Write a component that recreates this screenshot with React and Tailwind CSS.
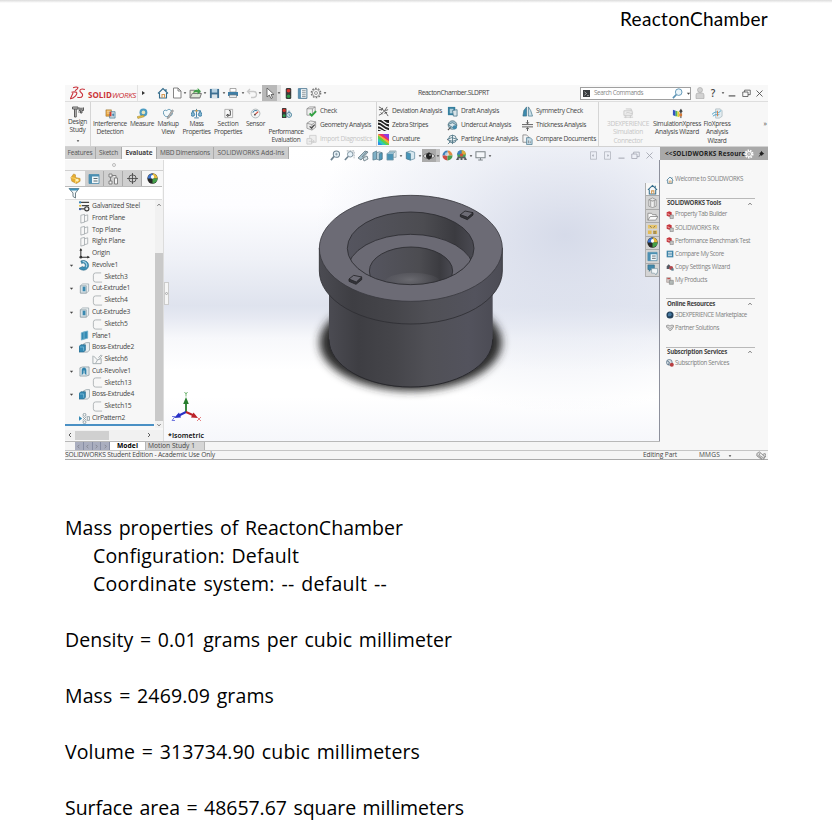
import React, { useLayoutEffect, useRef } from "react";

// Single line of text whose tracking is adjusted so that it spans `w` pixels.
function Fit({ w, children, className = "" }) {
  const ref = useRef(null);
  useLayoutEffect(() => {
    const el = ref.current;
    const adjust = () => {
      el.style.letterSpacing = "0px";
      const natural = el.getBoundingClientRect().width;
      el.style.letterSpacing = (w - natural) / el.textContent.length + "px";
    };
    adjust();
    if (document.fonts && document.fonts.ready) document.fonts.ready.then(adjust);
  }, [w, children]);
  return (
    <span ref={ref} className={"inline-block shrink-0 whitespace-pre " + className}>
      {children}
    </span>
  );
}

const art = {
  home: (
    <g fill="none" stroke="#356d8c" strokeWidth="1.1">
      <path d="M1 6.5 6 1.5 11 6.5M2.5 6V11H9.5V6M9 2v2" />
      <path d="M5 11V7.5H7.5V11" stroke="#d39a55" />
    </g>
  ),
  page: <path d="M2.5 1H7L10 4V11H2.5ZM7 1V4H10" fill="#fff" stroke="#777" strokeWidth=".9" />,
  open: (
    <g strokeWidth=".9">
      <path d="M1 10V3H5L6 4H10V10Z" fill="#ececd8" stroke="#777" />
      <path d="M1 10 3 6H11.5L10 10Z" fill="#dfe6d8" stroke="#777" />
      <path d="M4 6C4 3 6 2 8 3V1L11 4 8 7V5C6 4.5 5 5 4 6Z" fill="#3f9d46" />
    </g>
  ),
  save: (
    <g>
      <path d="M1 1H11V11H1Z" fill="#3d6f92" />
      <path d="M3 1H9V5H3Z" fill="#b9d2e2" />
      <path d="M3 7H9V11H3Z" fill="#dde5ea" />
    </g>
  ),
  print: (
    <g>
      <path d="M3 1.5H9V5H3Z" fill="#fff" stroke="#888" strokeWidth=".7" />
      <path d="M1 5H11V9H1Z" fill="#3f7ea6" />
      <path d="M2.5 8H9.5V10.5H2.5Z" fill="#e9eef2" stroke="#777" strokeWidth=".6" />
    </g>
  ),
  undo: <path d="M4 2 1.5 4.5 4 7M2 4.5H7.5A3 3 0 0 1 7.5 10.5H5" fill="none" stroke="#c9c9c9" strokeWidth="1.3" />,
  cursor: <path d="M3 1V10L5.3 8 7 11.5 8.5 10.8 7 7.5H10Z" fill="#fff" stroke="#555" strokeWidth=".8" />,
  light: (
    <g>
      <rect x="3" y="0" width="6" height="12" rx="1.5" fill="#3a3a3a" />
      <circle cx="6" cy="3" r="2" fill="#d9362f" />
      <circle cx="6" cy="9" r="1.9" fill="#2f9a48" />
    </g>
  ),
  list: (
    <g>
      <path d="M1.5 .7H10.8V11.3H1.5Z" fill="#f5f9fb" stroke="#4a758f" strokeWidth="1" />
      <path d="M1.5 .7H4.3V11.3H1.5Z" fill="#5c93b4" />
      <path d="M5.5 3H9.5M5.5 5.2H9.5M5.5 7.4H9.5M5.5 9.4H9.5" stroke="#4b5961" strokeWidth=".7" />
    </g>
  ),
  config2: (
    <g>
      <path d="M1 1.5H11V10.500H1Z" fill="#f1f7fa" stroke="#4a88a8" strokeWidth=".8" />
      <path d="M1 1.5H11V3.5H1ZM1 3H4V10.5H1Z" fill="#4b8fb2" />
      <path d="M5.500 5.500H9.500M5.500 8H9.500" stroke="#4b5961" strokeWidth=".9" />
    </g>
  ),
  gear: (
    <g fill="none" stroke="#777">
      <circle cx="6" cy="6" r="4.7" strokeWidth="1.3" strokeDasharray="1.6 1.35" />
      <circle cx="6" cy="6" r="3.7" strokeWidth=".7" />
      <circle cx="6" cy="6" r="1.5" strokeWidth=".7" />
    </g>
  ),
  bolt: (
    <g fill="none" stroke="#5b5b5b" strokeWidth="1">
      <path d="M.5 1H6V3H.5ZM2.500 3V11H4.200V3" fill="#ccc" />
      <path d="M7 1.500V4.500H8.500V7H10V4.500H11.500V1.500M8 3H10.500" fill="#aaa" />
      <path d="M6 6H8" stroke="#888" />
    </g>
  ),
  interference: (
    <g>
      <path d="M1 2H7V9H1Z" fill="#e8a23b" stroke="#94753d" strokeWidth=".6" />
      <path d="M5 4H11V11H5Z" fill="#c8d9e2" stroke="#3f7793" strokeWidth=".7" />
      <path d="M5 4H7V9H5Z" fill="#d63c2f" />
      <path d="M2 3.5H6M2 5.5H5" stroke="#fff1cc" strokeWidth=".8" />
      <path d="M9 6V9M7.5 7.5H10" stroke="#387daa" />
    </g>
  ),
  measure: (
    <g>
      <circle cx="7" cy="4.8" r="4.3" fill="#4d9cc2" />
      <circle cx="7" cy="4.8" r="2" fill="#e8e5ba" />
      <path d="M0 9.5 7 7.5 8 9.5 1 11.5Z" fill="#e5bf42" stroke="#927c39" strokeWidth=".5" />
    </g>
  ),
  markup: (
    <g>
      <path d="M1 7C-1 4 2 1 4 3 6 0 10 2 9 5 12 6 9 9 7 8 5 10 2 10 1 7Z" fill="#f4fafc" stroke="#4a88a7" strokeWidth=".9" />
      <path d="M5 10 10 2 11.5 3 6.5 11 4.5 11.5Z" fill="#b8b8b8" stroke="#666" strokeWidth=".5" />
    </g>
  ),
  mass: (
    <g fill="none" stroke="#3d7ca2" strokeWidth="1">
      <path d="M6 1V10M1.5 3H10.5M3.5 10.8H8.5" />
      <path d="M0 7 2 3 4 7A2 2 0 0 1 0 7M8 7 10 3 12 7A2 2 0 0 1 8 7" fill="#7fb5d1" />
      <circle cx="6" cy="3" r="1.2" fill="#cf9b3c" stroke="none" />
    </g>
  ),
  section: (
    <g>
      <path d="M2 1.5H10.5V10.5H2Z" fill="#f8f8f8" stroke="#999" strokeWidth=".8" />
      <path d="M8 3V8H5.5M6.500 2.800H8M5.500 9.300 3.700 8 5.500 6.600Z" fill="none" stroke="#333" strokeWidth=".9" />
    </g>
  ),
  sensor: (
    <g fill="none">
      <circle cx="6" cy="6" r="4.8" fill="#f4f4f4" stroke="#9aa4a8" strokeWidth=".8" />
      <path d="M3 5A3.3 3.3 0 0 1 8 3.2" stroke="#387da3" strokeWidth="1.1" />
      <path d="M5 7.5 9 4" stroke="#d1402e" strokeWidth="1.2" />
      <circle cx="5.3" cy="7.3" r="1" fill="#555" />
    </g>
  ),
  perf: (
    <g>
      <rect x="1" y="0" width="5" height="11" rx="1" fill="#383838" />
      <circle cx="3.5" cy="2.6" r="1.8" fill="#d5322c" />
      <circle cx="3.5" cy="8.4" r="1.6" fill="#2e9a4b" />
      <circle cx="8.8" cy="7.5" r="2.7" fill="#e9eff1" stroke="#417d99" strokeWidth="1" />
      <path d="M7.5 3.5H10M8.8 6V8H10" stroke="#417d99" strokeWidth=".8" fill="none" />
    </g>
  ),
  check: (
    <g>
      <path d="M1 3 4 1H10V7L7 10H1ZM1 3H7V10M7 3 10 1" fill="#f0f0f0" stroke="#888" strokeWidth=".8" />
      <path d="M4 8 6.3 10.5 11 5.5" fill="none" stroke="#33a344" strokeWidth="2.100" />
    </g>
  ),
  geometry: (
    <g>
      <path d="M1 3.5 5 1 10.5 2V8L6.5 11 1 9ZM1 3.5 6.5 5V11M6.5 5 10.5 2" fill="#ececec" stroke="#888" strokeWidth=".8" />
      <path d="M4 7 6 9 9.5 5" fill="none" stroke="#444" strokeWidth="1.3" />
    </g>
  ),
  importd: <path d="M1 5H6V11H1ZM4 5V1.5H11V9H6M3 8H9M7 6 9 8 7 10" fill="#eee" stroke="#ccc" strokeWidth=".9" />,
  deviation: (
    <g fill="none" stroke="#555" strokeWidth="1">
      <path d="M1 1C4 2 9 7 11 11M1 10C4 9 6 7 10 1" />
      <path d="M1 4H4M5 2 4 5M8 5 11 4M7 8 10 7M3 7 5 9" stroke="#222" strokeWidth=".8" />
    </g>
  ),
  zebra: (
    <g>
      <path d="M0 0H12V12H0Z" fill="#222" />
      <path d="M0 2C5 2 6 7 12 8M0 6C4 6 6 11 12 12M0 10C3 10 4 12 6 12M4 0C7 1 8 4 12 4" fill="none" stroke="#fff" strokeWidth="1.4" />
    </g>
  ),
  curvature: (
    <g>
      <path d="M0 0H12V12Z" fill="#e736bb" />
      <path d="M0 0V12H12Z" fill="#2b8fe9" />
      <path d="M12 0V6L5 0Z" fill="#8b3de0" />
      <path d="M0 0H5L12 6V8Z" fill="#ee3161" />
      <path d="M0 0 12 8V11L0 2Z" fill="#f4b52c" />
      <path d="M0 2 12 11V12H9L0 5Z" fill="#63d43c" />
      <path d="M0 5 9 12H5L0 8Z" fill="#2fd0b0" />
    </g>
  ),
  draft: (
    <g>
      <path d="M1 1H9V10H1Z" fill="#357f9f" />
      <path d="M3 3H7V8H3Z" fill="#aecfdb" />
      <path d="M6 5 11 4V11H7Z" fill="#d9e4e8" stroke="#3d6d83" strokeWidth=".8" />
    </g>
  ),
  undercut: (
    <g>
      <circle cx="6" cy="5.5" r="4.700" fill="#9fbfcd" stroke="#597784" strokeWidth=".8" />
      <path d="M1 5 6 3 11 6 6 8Z" fill="#dbe7ec" stroke="#3c6577" strokeWidth=".7" />
      <circle cx="8.5" cy="8" r="2.3" fill="#438aab" />
      <path d="M1 11 4 8" stroke="#555" strokeWidth="1.2" />
    </g>
  ),
  parting: (
    <g fill="#edf2f4" stroke="#4c7383" strokeWidth=".9">
      <circle cx="6" cy="5.5" r="4.2" />
      <path d="M0 6 5 4 12 6 6 8ZM6 1V11" />
      <path d="M1 11 4 8" />
    </g>
  ),
  symmetry: (
    <g strokeWidth=".7">
      <path d="M5 1V11H1L2 5Z" fill="#3d8aae" stroke="#356c83" />
      <path d="M7 1V11H11.5L9.5 5Z" fill="#cce0e9" stroke="#356c83" />
    </g>
  ),
  thickness: <path d="M0 5H12M0 7.5H12M6 0V4M4.500 2.5 6 4.200 7.500 2.5M6 12V8.5M4.500 10 6 8.300 7.500 10" fill="none" stroke="#555" strokeWidth="1" />,
  compare: (
    <g fill="#f4f4f4" stroke="#777" strokeWidth=".8">
      <path d="M1 1H5L7 3V9H1Z" />
      <path d="M5 4H9L11 6V11.5H5Z" fill="#c6dce7" stroke="#4c7990" />
      <path d="M7 7V10M9 8V10" />
    </g>
  ),
  threedx: <path d="M1 3H10V8H1ZM3 1H9V3M3 6C6 3 9 8 11 5M1 10H11M3 8V11M8 8V11" fill="#eee" stroke="#c6c6c6" strokeWidth=".9" />,
  sim: (
    <g>
      <path d="M1 2 4 3V9L1 8Z" fill="#3151c1" />
      <path d="M4 3 6 3.5V9.3L4 9Z" fill="#55b852" />
      <path d="M6 3.5 8 4V10L6 9.5Z" fill="#ebd034" />
      <path d="M9.700 1V11" stroke="#333" strokeWidth="1" />
      <circle cx="9.700" cy="3.500" r="1.6" fill="#444" />
      <path d="M8 6H11V9H8Z" fill="#d77835" />
    </g>
  ),
  flo: (
    <g fill="none" strokeWidth="1">
      <path d="M4 1H9L11 3V9L8 11H4Z" fill="#e3edf1" stroke="#a9b7bd" strokeWidth=".8" />
      <path d="M0 7C3 4 5 4 7 5 8 5 9 3 10 3M1 9C4 6 7 8 8 7" stroke="#429bc4" />
      <path d="M6 3V9" stroke="#d67f46" />
    </g>
  ),
  zoomfit: (
    <g fill="none" stroke="#6d8391" strokeWidth="1.1">
      <circle cx="7" cy="4.5" r="3.4" fill="#e7f1f7" />
      <path d="M4.5 7 1 11" strokeWidth="1.8" />
      <path d="M5.5 4.5H8.5M7 3V6" strokeWidth=".7" />
    </g>
  ),
  zoomarea: (
    <g fill="none" stroke="#8b989f" strokeWidth=".9">
      <path d="M3 1H11V9" strokeDasharray="2 1" />
      <circle cx="6.8" cy="4.7" r="3" fill="#e8f3fa" stroke="#6d8391" />
      <path d="M4.5 7 1 11" strokeWidth="1.7" stroke="#6d8391" />
    </g>
  ),
  prev: (
    <g strokeWidth=".8" stroke="#667780">
      <path d="M1 8 8 1 11 2 4 10Z" fill="#a9c5d1" />
      <path d="M6 8 10 6 11 9 7 11ZM5 7 10 1" fill="#dce7eb" />
    </g>
  ),
  sectionview: (
    <g stroke="#4b7082" strokeWidth=".7">
      <path d="M1 3 5 1V10L1 11Z" fill="#7fb0c6" />
      <path d="M5 3 8 2 11 3V10L8 11 5 10Z" fill="#c3d6df" />
      <path d="M8 4 11 3V10L8 11Z" fill="#509abb" />
    </g>
  ),
  cubes: (
    <g stroke="#7d97a2" strokeWidth=".7">
      <path d="M4 1H11V8H4Z" fill="#e3ebef" />
      <path d="M1 4H8V11H1Z" fill="#4b94b6" />
      <path d="M1 4 4 2H10L8 4" fill="#9bc5d8" />
    </g>
  ),
  cube: (
    <g stroke="#4b7c93" strokeWidth=".7">
      <path d="M1.5 2.5 6 1 10.5 2.5V9.5L6 11 1.5 9.5Z" fill="#d8e8f0" />
      <path d="M1.5 2.5 6 4V11L1.5 9.5Z" fill="#4695ba" />
    </g>
  ),
  eye: (
    <g>
      <path d="M0 6C3 2.5 9 2.5 12 6 9 9.5 3 9.5 0 6Z" fill="#ddd" stroke="#555" strokeWidth=".7" />
      <circle cx="6" cy="6" r="3" fill="#222" />
      <path d="M6 2V10" stroke="#222" strokeWidth=".8" />
      <circle cx="7" cy="5" r=".8" fill="#ddd" />
    </g>
  ),
  ball: (
    <g>
      <path d="M6 6V.5A5.5 5.5 0 0 1 11.5 6Z" fill="#e08a45" />
      <path d="M6 6V.5A5.5 5.5 0 0 0 .5 6Z" fill="#3b80b9" />
      <path d="M6 6H.5A5.5 5.5 0 0 0 6 11.5Z" fill="#cc4c44" />
      <path d="M6 6H11.5A5.5 5.5 0 0 1 6 11.5Z" fill="#4d9c4c" />
      <ellipse cx="5.500" cy="4.500" rx="2.300" ry="2" fill="#fff" opacity=".6" />
    </g>
  ),
  ballDark: (
    <g>
      <circle cx="6" cy="6" r="5.6" fill="#272727" />
      <path d="M6 6V.6A5.4 5.4 0 0 1 11.4 6Z" fill="#e5bb3c" />
      <path d="M6 6V.6A5.4 5.4 0 0 0 .8 6Z" fill="#3d74cf" />
      <path d="M6 6H11.4A5.4 5.4 0 0 1 6 11.4Z" fill="#45a14a" />
      <ellipse cx="6" cy="4.3" rx="1.7" ry="2" fill="#fff" />
    </g>
  ),
  scene: (
    <g>
      <circle cx="6" cy="5" r="4.800" fill="#4aa05a" />
      <path d="M6 5V.200A4.800 4.800 0 0 1 10.800 5Z" fill="#e1a93a" />
      <path d="M6 5V.200A4.800 4.800 0 0 0 1.200 5Z" fill="#3f7ec4" />
      <path d="M4.500 4H7.500V7H4.500Z" fill="#d34c39" />
      <path d="M0 11 2 7 6 8 10 7 12 11Z" fill="#565b60" />
      <path d="M3 9H5V11H3ZM7 9H9V11H7Z" fill="#ddd" />
    </g>
  ),
  monitor: <path d="M1 2H11V8.5H1ZM6 8.5V11M3.500 11H8.500" fill="#f5f7fa" stroke="#7c8488" strokeWidth="1.1" />,
  part: (
    <g>
      <path d="M1 5 4 1 6 2 6 5 11 6V9L7 11.5 2 9Z" fill="#e6ad2e" stroke="#b8872c" strokeWidth=".6" />
      <circle cx="7.8" cy="8" r="1.6" fill="#fff0b6" />
      <path d="M1 5 6 6V11" fill="none" stroke="#fbd673" strokeWidth="1" />
    </g>
  ),
  config: <path d="M2 1H5V4H2ZM2 8H5V11H2ZM7.5 5H10.5V11H7.5ZM3.5 4V8M5 2.5H9V5" fill="#f4f4f4" stroke="#777" strokeWidth=".9" />,
  target: (
    <g fill="none" stroke="#444" strokeWidth=".9">
      <circle cx="6" cy="6" r="4" />
      <path d="M6 0V12M0 6H12" />
    </g>
  ),
  filter: (
    <g>
      <path d="M1 1.5H11L7.5 6V11L5 9.5V6Z" fill="#f4f9fb" stroke="#63777f" strokeWidth=".9" />
      <path d="M1 1.5H11L9.5 3.5H2.5Z" fill="#3d92ba" />
    </g>
  ),
  material: (
    <g>
      <path d="M0 1.5H11M3 5H11M0 8.5H6" stroke="#444" strokeWidth="1.3" />
      <circle cx="1.2" cy="1.5" r="1.2" fill="#3a8cc0" />
      <circle cx="1.2" cy="5.2" r="1.2" fill="#dfb932" />
      <circle cx="1.2" cy="9" r="1.2" fill="#3f63b0" />
      <circle cx="8.5" cy="8.5" r="2.3" fill="#eee" stroke="#333" strokeWidth="1.2" />
    </g>
  ),
  plane: <path d="M2 2.5 6 1.500V10L2 11ZM6 3 9.500 2V8.500L6 9.500" fill="#f7f7f7" stroke="#9aa1a5" strokeWidth=".8" />,
  origin: (
    <g>
      <path d="M2 1V10H11" fill="none" stroke="#333" strokeWidth="1.1" />
      <path d="M.500 3 2 0 3.500 3ZM9 8.500 12 10 9 11.500Z" fill="#333" />
      <circle cx="2" cy="10" r="1.5" fill="#333" />
    </g>
  ),
  revolve: (
    <g>
      <path d="M2 1C8-1 12 4 10 8 8 12 3 12 0 9L4 7C6 9 8 6 6 4 5 3 4 3 3 4Z" fill="#3b8fb6" stroke="#286380" strokeWidth=".6" />
      <path d="M4 1.5C8 2 9.5 5 8 8" fill="none" stroke="#add7e8" strokeWidth="1.2" />
    </g>
  ),
  sketch: <path d="M10 1H4Q1.5 1 1.5 3.5V8.5Q1.5 11 4 11H11" fill="none" stroke="#a5abae" strokeWidth=".9" />,
  sketch6: <path d="M1 2V10.5H10V5L6 6.5 1.5 2M6 6.5 4 10M7 4 10 1 11 2 8 5" fill="none" stroke="#98a1a5" strokeWidth=".9" />,
  cut: (
    <g strokeWidth=".7">
      <path d="M1.500 3 4 1H10.500V9L8 11H1.500Z" fill="#eaeff1" stroke="#8b9ba2" />
      <path d="M1.500 3H8V11H1.500Z" fill="#d5dfe4" stroke="#8b9ba2" />
      <path d="M4 4H7V9H4Z" fill="#3989b1" />
    </g>
  ),
  planeBlue: <path d="M2.500 3 5.500 2V10L2.500 11ZM5.500 2 9.500 1V9L5.500 10Z" fill="#348bb4" stroke="#6fb0cc" strokeWidth=".7" />,
  boss: (
    <g strokeWidth=".7">
      <path d="M5 2 8 .7H11.5V9L9 11H5Z" fill="#e9eef0" stroke="#7b8d95" />
      <path d="M0 5 2 3H7V9L5 11H0Z" fill="#3389b4" stroke="#2a6685" />
      <path d="M1 5.500H5V9.500" fill="none" stroke="#92c9df" />
    </g>
  ),
  cutrev: (
    <g strokeWidth=".7">
      <path d="M1 2 4 1H11V10L8 11H1Z" fill="#dae4e8" stroke="#7b8d95" />
      <path d="M3 10V4C4 1 7 1 8 4V10L6 8V5H5V8Z" fill="#2f83ad" />
    </g>
  ),
  pattern: (
    <g fill="#f3f3f3" stroke="#7b8d95" strokeWidth=".8">
      <path d="M0 4 3 6 0 8Z" fill="#3388b2" stroke="#3388b2" />
      <circle cx="6" cy="2" r="1.6" />
      <circle cx="6" cy="10" r="1.6" />
      <path d="M9 4H11.5V8H9ZM4 4 8 8M8 4 4 8" />
    </g>
  ),
  lib: <path d="M2 3 6 1 10 3V10L6 11.5 2 10ZM2 3 6 4.5 10 3M4 4V10M8 4V10" fill="#eee" stroke="#888" strokeWidth=".8" />,
  folder: <path d="M1 10V2.5H5L6 4H10V6M1 10 3.5 6H12L9.5 10Z" fill="#fafafa" stroke="#888" strokeWidth=".9" />,
  palette: (
    <g>
      <path d="M1 1H11V5H1Z" fill="#e8c56a" />
      <path d="M1 7H5V11H1ZM6.5 7H11V11H6.5Z" fill="#e3bb56" />
      <path d="M3 2 5 4M9 2 7 4M7 8.500H10M7 10H10" stroke="#6d685b" strokeWidth=".9" />
    </g>
  ),
  chat: (
    <g strokeWidth=".7">
      <path d="M1 1H8V6H4L2.5 8V6H1Z" fill="#4289ad" stroke="#33677f" />
      <path d="M5 5H11.5V10H10V12L8 10H5Z" fill="#f2f6f8" stroke="#7d96a2" />
    </g>
  ),
  redtool: (
    <g>
      <path d="M1 2 5 .5 8.5 2V7L5 8.5 1 7Z" fill="#c6353c" />
      <path d="M3 3V5.5H6" fill="none" stroke="#f4bdbd" />
      <path d="M6 6H11V11.3H6Z" fill="#c5c5c5" stroke="#777" strokeWidth=".8" />
    </g>
  ),
  score: (
    <g>
      <path d="M1 1H11V11H1Z" fill="#3e84a8" />
      <path d="M9 3.500H3M3 6H9M3 8.500H9" fill="none" stroke="#fff" strokeWidth="1.2" />
    </g>
  ),
  copytool: (
    <g>
      <path d="M1 5 4 2 7 5 5 9H1Z" fill="#555b65" />
      <circle cx="7.7" cy="7.5" r="3" fill="#b6464b" />
      <path d="M8 8H11.5V11.5H8Z" fill="#5b7f8d" />
    </g>
  ),
  products: (
    <g>
      <path d="M1 1H7V8H1Z" fill="#d5cecb" stroke="#94807c" strokeWidth=".8" />
      <path d="M2 2.5H6" stroke="#bd3d3b" strokeWidth="1.5" />
      <path d="M5 5H11V11H5Z" fill="#b3bab8" stroke="#777" strokeWidth=".8" />
    </g>
  ),
  globe: (
    <g>
      <circle cx="6" cy="6" r="5.3" fill="#23415b" />
      <path d="M3 4 6 2 9 5 7 8 3 8Z" fill="#4678a0" />
    </g>
  ),
  partner: <path d="M0 3 3 1.500 6 3 9 1.500 12 3 8 9 6 10 2 6ZM3 4 6 7 9 4" fill="#ddd" stroke="#777" strokeWidth="1" />,
  subs: (
    <g>
      <circle cx="5" cy="5" r="4.3" fill="#d6dde2" stroke="#46637b" strokeWidth="1" />
      <path d="M2 3 5 5 4 9" fill="none" stroke="#46637b" strokeWidth="1.3" />
      <circle cx="8.7" cy="8.5" r="3" fill="#b73f41" />
    </g>
  ),
  magnify: (
    <g fill="none" stroke="#5b93b4">
      <circle cx="7.3" cy="4.5" r="3.6" strokeWidth="1" fill="#eaf4f9" />
      <path d="M4.7 7.2 1 11" strokeWidth="1.7" />
    </g>
  ),
  prompt: (
    <g>
      <path d="M0 0H12V12H0Z" fill="#3a3d40" />
      <path d="M2.5 3 6 6 2.5 9M7 9.5H10" fill="none" stroke="#ddd" strokeWidth="1.1" />
    </g>
  ),
  user: <path d="M6 .5A2.5 2.5 0 1 1 6 5.5 2.5 2.5 0 1 1 6 .5M2 11.5V8Q2 6 4 6H8Q10 6 10 8V11.5Z" fill="#d2d2d2" stroke="#a5a5a5" strokeWidth=".6" />,
  restore: <path d="M1 4H8V10H1ZM3.5 4V1.5H11V7.5H8" fill="none" stroke="currentColor" strokeWidth="1" />,
  min: <path d="M2 9.5H10" stroke="currentColor" strokeWidth="1.3" />,
  close: <path d="M2 2 10 10M10 2 2 10" stroke="currentColor" strokeWidth="1.1" />,
  dock: <path d="M2 1H10V11H2ZM6 5 4 6 6 7Z" fill="none" stroke="currentColor" strokeWidth=".8" />,
  pin: <path d="M6 1 11 6 9 6.5 7 9 6 7.5 2 11 4.8 6.2 3.5 5 6 3Z" fill="#222" />,
  tags: (
    <g fill="#ddd" stroke="#777" strokeWidth=".8">
      <path d="M1 3 4 1 11 7 8 11 1 6ZM2 5 8 10M5 2 4 5 10 9M8 4 11 3 12 6 10 8" />
    </g>
  ),
  up: <path d="M2.5 8 6 4 9.5 8" fill="none" stroke="#555" strokeWidth="1.3" />,
  down: <path d="M2.5 4 6 8 9.5 4" fill="none" stroke="#555" strokeWidth="1.3" />,
  left: <path d="M8 2 4 6 8 10" fill="none" stroke="#444" strokeWidth="1.7" />,
  right: <path d="M4 2 8 6 4 10" fill="none" stroke="#444" strokeWidth="1.7" />,
  caret: <path d="M2 4H10L6 9Z" fill="#444" />,
};

function Ic({ n, className = "size-3" }) {
  return (
    <svg viewBox="0 0 12 12" className={"block shrink-0 " + className}>
      {art[n]}
    </svg>
  );
}

// Fixed-width slot that centres whatever is placed in it.
function Slot({ className = "", children }) {
  return <div className={"flex h-full shrink-0 items-center justify-center " + className}>{children}</div>;
}

const Dot = () => <Ic n="caret" className="size-[4px]" />;

function TitleBar() {
  return (
    <div className="flex h-[17px] shrink-0 items-center border-b border-[#dedede] bg-[#f8f8f8]">
      <div className="flex h-full w-[73px] shrink-0 items-center border-r border-[#e2e2e2] pl-[5px] text-[#cb3437]">
        <svg viewBox="0 0 42 36" className="mr-[2px] h-[14px] w-[16px] shrink-0">
          <g fill="none" stroke="#c9303a" strokeWidth="2.8" strokeLinejoin="round">
            <path d="M8 4Q18 1 21 4 21 7 13 12M4 16Q12 14 17 16 20 20 14 26 8 32 1 33L8 18" />
            <path d="M39 9Q29 5 26 11C24 17 36 18 33 25Q30 32 19 29" />
          </g>
        </svg>
        <Fit w={24} className="mt-[4px] text-[8px] leading-none font-bold">SOLID</Fit>
        <Fit w={24} className="mt-[4px] text-[8px] leading-none italic">WORKS</Fit>
      </div>
      <Slot className="w-2"><span className="ml-[2px] border-y-[2.5px] border-l-[3px] border-y-transparent border-l-[#333]" /></Slot>
      <Slot className="ml-[10px] w-[14px]"><Ic n="home" /></Slot>
      <Slot className="w-[13px]"><Ic n="page" /></Slot>
      <Slot className="w-[4px]"><Dot /></Slot>
      <Slot className="w-4"><Ic n="open" className="size-[13px]" /></Slot>
      <Slot className="w-[4px]"><Dot /></Slot>
      <Slot className="w-[14px]"><Ic n="save" className="size-[11px]" /></Slot>
      <Slot className="w-[5px]"><Dot /></Slot>
      <Slot className="w-[14px]"><Ic n="print" /></Slot>
      <Slot className="w-[5px]"><Dot /></Slot>
      <Slot className="w-[13px]"><Ic n="undo" /></Slot>
      <Slot className="w-[4px]"><Dot /></Slot>
      <Slot className="w-[15px] bg-[#b9b9b9]"><Ic n="cursor" /></Slot>
      <Slot className="w-[4px] bg-[#e0e0e0]"><Dot /></Slot>
      <Slot className="ml-px w-[13px]"><Ic n="light" className="size-[11px]" /></Slot>
      <Slot className="w-[14px]"><Ic n="list" className="size-[11px]" /></Slot>
      <Slot className="w-[13px]"><Ic n="gear" /></Slot>
      <Slot className="w-[5px]"><Dot /></Slot>
      <Fit w={71} className="ml-[91px] text-[6.8px]">ReactonChamber.SLDPRT</Fit>
      <div className="ml-[91px] flex h-[13px] w-[111px] shrink-0 items-center border border-[#a0a0a0] bg-white">
        <Ic n="prompt" className="ml-[2px] size-[7px]" />
        <Fit w={49} className="ml-[4px] text-[6.3px] text-[#888]">Search Commands</Fit>
        <Ic n="magnify" className="ml-[29px] size-[11px]" />
        <Ic n="caret" className="ml-[3px] size-[5px]" />
      </div>
      <Slot className="ml-[3px] w-3"><Ic n="user" /></Slot>
      <Slot className="w-[14px] text-[10px] font-semibold">?</Slot>
      <Slot className="w-[5px]"><Dot /></Slot>
      <Slot className="w-[14px]"><Ic n="min" className="size-[10px]" /></Slot>
      <Slot className="w-[14px]"><Ic n="restore" className="size-[9px]" /></Slot>
      <Slot className="w-[13px]"><Ic n="close" className="size-[9px]" /></Slot>
    </div>
  );
}

function Tool({ icon, lines, className, gray = false, gap = "mt-[1px]" }) {
  return (
    <div className={"flex h-full shrink-0 flex-col items-center pt-[6px] " + className + (gray ? " text-[#c6c6c6]" : "")}>
      <Ic n={icon} className="size-[11px]" />
      <div className={"flex flex-col items-center " + gap}>
        {lines.map(([t, w]) => (
          <div key={t} className="flex h-[8.3px] items-center"><Fit w={w} className="text-[6.6px] leading-[8px]">{t}</Fit></div>
        ))}
      </div>
    </div>
  );
}

function ToolColumn({ rows, className }) {
  return (
    <div className={"flex h-full shrink-0 flex-col pt-[2px] " + className}>
      {rows.map(([icon, t, w, gray]) => (
        <div key={t} className={"flex h-[14px] items-center gap-[3px] " + (gray ? "text-[#c5c5c5]" : "")}>
          <Ic n={icon} className="size-[11px]" />
          <Fit w={w} className="text-[6.6px] leading-none">{t}</Fit>
        </div>
      ))}
    </div>
  );
}

function Ribbon() {
  return (
    <div className="flex h-[45px] shrink-0 border-b border-[#d2d2d2] bg-[#f7f7f7]">
      <div className="flex w-[26px] shrink-0 flex-col items-center border-r border-[#d5d5d5] pt-[4px]">
        <Ic n="bolt" />
        <Fit w={19} className="text-[6.6px] leading-[8px]">Design</Fit>
        <Fit w={16} className="text-[6.6px] leading-[8px]">Study</Fit>
        <Ic n="caret" className="mt-[5px] size-[4px]" />
      </div>
      <Tool icon="interference" className="w-[38px]" lines={[["Interference", 34], ["Detection", 27]]} />
      <Tool icon="measure" className="w-[26px]" lines={[["Measure", 24]]} />
      <Tool icon="markup" className="w-[26px]" lines={[["Markup", 21], ["View", 13]]} />
      <Tool icon="mass" className="w-[31px]" lines={[["Mass", 14], ["Properties", 28]]} />
      <Tool icon="section" className="w-[32px]" lines={[["Section", 21], ["Properties", 28]]} />
      <Tool icon="sensor" className="w-[23px]" lines={[["Sensor", 19]]} />
      <Tool icon="perf" className="w-[38px]" gap="mt-[9px]" lines={[["Performance", 35], ["Evaluation", 29]]} />
      <ToolColumn className="ml-[1px] w-[71px] border-r border-[#d5d5d5]" rows={[["check", "Check", 17], ["geometry", "Geometry Analysis", 51], ["importd", "Import Diagnostics", 52, true]]} />
      <ToolColumn className="ml-[1px] w-[69px]" rows={[["deviation", "Deviation Analysis", 50], ["zebra", "Zebra Stripes", 36], ["curvature", "Curvature", 28]]} />
      <ToolColumn className="w-[75px]" rows={[["draft", "Draft Analysis", 38], ["undercut", "Undercut Analysis", 50], ["parting", "Parting Line Analysis", 57]]} />
      <ToolColumn className="w-[77px] border-r border-[#d5d5d5]" rows={[["symmetry", "Symmetry Check", 47], ["thickness", "Thickness Analysis", 50], ["compare", "Compare Documents", 60]]} />
      <Tool icon="threedx" gray className="ml-[5px] w-[48px]" lines={[["3DEXPERIENCE", 42], ["Simulation", 30], ["Connector", 29]]} />
      <Tool icon="sim" className="w-[50px]" lines={[["SimulationXpress", 48], ["Analysis Wizard", 44]]} />
      <Tool icon="flo" className="w-[30px]" lines={[["FloXpress", 27], ["Analysis", 22], ["Wizard", 19]]} />
      <div className="ml-auto pr-px pt-[18px] text-[7px] leading-none">»</div>
    </div>
  );
}

function TabsAndHud() {
  const tab = "flex h-3 shrink-0 items-center justify-center border-r border-[#a9a9a9] bg-[#cdcdcd] text-[#555] ";
  return (
    <div className="flex h-[13px] shrink-0 items-start">
      <div className={tab + "w-[31px]"}><Fit w={25} className="text-[6.5px]">Features</Fit></div>
      <div className={tab + "w-[26px]"}><Fit w={19} className="text-[6.5px]">Sketch</Fit></div>
      <div className="flex h-3 w-[34px] shrink-0 items-center justify-center bg-[#f9f9f9]"><Fit w={27} className="text-[6.4px] font-bold">Evaluate</Fit></div>
      <div className={tab + "w-[58px] border-l"}><Fit w={50} className="text-[6.5px]">MBD Dimensions</Fit></div>
      <div className={tab + "w-[75px]"}><Fit w={67} className="text-[6.5px]">SOLIDWORKS Add-Ins</Fit></div>
      <div className="mt-[2px] flex h-[13px] flex-1 items-center">
        <Slot className="ml-[39px] w-[14px]"><Ic n="zoomfit" className="size-[11px]" /></Slot>
        <Slot className="w-[14px]"><Ic n="zoomarea" className="size-[11px]" /></Slot>
        <Slot className="w-[14px]"><Ic n="prev" /></Slot>
        <Slot className="w-[14px]"><Ic n="sectionview" className="size-[11px]" /></Slot>
        <Slot className="w-[14px]"><Ic n="cubes" className="size-[11px]" /></Slot>
        <Slot className="w-[5px]"><Dot /></Slot>
        <Slot className="w-[14px]"><Ic n="cube" className="size-[11px]" /></Slot>
        <Slot className="w-[5px]"><Dot /></Slot>
        <Slot className="w-[14px] bg-[#aaa]"><Ic n="eye" /></Slot>
        <Slot className="w-[4px] bg-[#c2c2c2]"><Dot /></Slot>
        <Slot className="w-[14px]"><Ic n="ball" className="size-[11px]" /></Slot>
        <Slot className="w-[14px]"><Ic n="scene" className="size-[11px]" /></Slot>
        <Slot className="w-[5px]"><Dot /></Slot>
        <Slot className="w-[14px]"><Ic n="monitor" className="size-[11px]" /></Slot>
        <Slot className="w-[5px]"><Dot /></Slot>
        <div className="ml-[97px] flex items-center gap-[5px] text-[#9fa2ad]">
          <Ic n="dock" className="size-[9px]" />
          <Ic n="dock" className="size-[9px] -scale-x-100" />
          <Ic n="min" className="size-[9px]" />
          <Ic n="restore" className="size-[9px]" />
          <Ic n="close" className="size-[9px]" />
        </div>
      </div>
    </div>
  );
}

const tree = [
  ["material", "Galvanized Steel", 48],
  ["plane", "Front Plane", 33],
  ["plane", "Top Plane", 29],
  ["plane", "Right Plane", 33],
  ["origin", "Origin", 18],
  ["revolve", "Revolve1", 26, "open"],
  ["sketch", "Sketch3", 23, "child"],
  ["cut", "Cut-Extrude1", 38, "open"],
  ["sketch", "Sketch4", 23, "child"],
  ["cut", "Cut-Extrude3", 38, "open"],
  ["sketch", "Sketch5", 23, "child"],
  ["planeBlue", "Plane1", 19],
  ["boss", "Boss-Extrude2", 42, "open"],
  ["sketch6", "Sketch6", 23, "child"],
  ["cutrev", "Cut-Revolve1", 39, "open"],
  ["sketch", "Sketch13", 27, "child"],
  ["boss", "Boss-Extrude4", 42, "open"],
  ["sketch", "Sketch15", 27, "child"],
  ["pattern", "CirPattern2", 33],
];

function FeaturePanel() {
  return (
    <div className="flex h-full w-[99px] shrink-0 flex-col border-r border-[#dcdcdc] bg-[#f7f7f7]">
      <div className="flex h-[11px] shrink-0 items-center justify-center border-b border-[#d0d0d0]">
        <span className="size-[4px] rounded-full border border-[#bbb]" />
      </div>
      <div className="flex h-[16px] w-[97px] shrink-0 border-b border-[#bbb] bg-[#cfcfcf]">
        <Slot className="w-[20px] bg-[#f7f7f7]"><Ic n="part" className="size-[11px]" /></Slot>
        <Slot className="w-[19px] border-r border-[#aaa]"><Ic n="config2" /></Slot>
        <Slot className="w-[19px] border-r border-[#aaa]"><Ic n="config" /></Slot>
        <Slot className="w-[19px] border-r border-[#aaa]"><Ic n="target" className="size-[11px]" /></Slot>
        <Slot className="w-[20px] bg-[#f7f7f7]"><Ic n="ballDark" className="size-[11px]" /></Slot>
      </div>
      <div className="flex h-[13px] w-[97px] shrink-0 items-center border-b border-[#ddd] bg-white pl-[3px]"><Ic n="filter" /></div>
      <div className="flex h-[228px] shrink-0">
        <div className="flex w-[90px] flex-col pt-[0.6px]">
          {tree.map(([icon, t, w, kind]) => (
            <div key={t} className={"flex h-[11.77px] shrink-0 items-center " + (kind === "child" ? "pl-[27px]" : "")}>
              {kind !== "child" && (
                <span className="flex w-[14px] shrink-0 pl-[4px]">{kind === "open" && <Ic n="caret" className="size-[5px]" />}</span>
              )}
              <Ic n={icon} className="size-[11px]" />
              <Fit w={w} className={(kind === "child" ? "ml-[1.5px]" : "ml-[2px]") + " text-[6.7px] leading-none"}>{t}</Fit>
            </div>
          ))}
          <div className="h-[2px] w-[89px] shrink-0 bg-[#4a90c4]" />
        </div>
        <div className="flex w-2 flex-col items-center bg-[#f1f1f1]">
          <Ic n="up" className="mt-[2px] size-[6px]" />
          <div className="mt-[45px] h-[168px] w-full bg-[#c9c9c9]" />
          <Ic n="down" className="mt-px size-[6px]" />
        </div>
      </div>
      <div className="mt-[2px] flex h-[10px] shrink-0 items-center bg-[#f1f1f1] pl-[2px]">
        <Ic n="left" className="size-[6px]" />
        <div className="ml-[2px] h-[9px] w-[34px] bg-[#d0d0d0]" />
        <Ic n="right" className="ml-[37px] size-[6px]" />
      </div>
    </div>
  );
}

function Chamber() {
  return (
    <svg viewBox="0 0 675 660" className="mt-[20px] ml-[136px] h-[220px] w-[225px] shrink-0 overflow-visible">
      <defs>
        <linearGradient id="side" x1="0" x2="1">
          <stop offset="0" stopColor="#4b4b52" />
          <stop offset=".18" stopColor="#3e3e43" />
          <stop offset=".4" stopColor="#45454a" />
          <stop offset=".6" stopColor="#505056" />
          <stop offset=".85" stopColor="#53535d" />
          <stop offset="1" stopColor="#4c4c55" />
        </linearGradient>
        <linearGradient id="bore" x1="0" x2="1">
          <stop offset="0" stopColor="#55555f" />
          <stop offset=".35" stopColor="#505057" />
          <stop offset=".6" stopColor="#4c4c51" />
          <stop offset=".85" stopColor="#3b3b40" />
          <stop offset="1" stopColor="#4a4a52" />
        </linearGradient>
        <radialGradient id="floor" cx=".45" cy=".35" r=".6">
          <stop offset="0" stopColor="#6a6a70" />
          <stop offset="1" stopColor="#5b5b62" stopOpacity="0" />
        </radialGradient>
        <filter id="soft" x="-20%" y="-20%" width="140%" height="140%"><feGaussianBlur stdDeviation="13" /></filter>
        <clipPath id="boreClip"><ellipse cx="332" cy="205" rx="190" ry="109" /></clipPath>
      </defs>
      <ellipse cx="332" cy="488" rx="273" ry="144" fill="#29292b" filter="url(#soft)" />
      <path d="M87 260V480A245.500 142 0 0 0 578 480V260Z" fill="url(#side)" />
      <path d="M87 478A245.500 143 0 0 0 578 478" fill="none" stroke="#29292d" strokeWidth="3" />
      <path d="M58 204V273A274.500 159 0 0 0 607 273V204Z" fill="url(#side)" stroke="#2e2e33" strokeWidth="2.500" />
      <ellipse cx="332.500" cy="205" rx="274.500" ry="159" fill="#6c6b75" stroke="#3a3a40" strokeWidth="2.500" />
      <ellipse cx="332" cy="205" rx="190" ry="109" fill="url(#bore)" />
      <g clipPath="url(#boreClip)">
        <ellipse cx="332" cy="272" rx="190" ry="109" fill="#6b6a74" stroke="#2b2b30" strokeWidth="2.500" />
        <ellipse cx="333" cy="273" rx="125" ry="72" fill="url(#bore)" stroke="#2b2b30" strokeWidth="2.500" />
        <ellipse cx="338" cy="308" rx="84" ry="30" fill="url(#floor)" />
      </g>
      <ellipse cx="332" cy="205" rx="190" ry="109" fill="none" stroke="#2b2b30" strokeWidth="2.500" />
      <g strokeWidth="2.500" strokeLinejoin="round" stroke="#242428">
        <path d="M481 104V110L502 119 519 105V98Z" fill="#34343a" />
        <path d="M481 104 495 93 519 98 503 112Z" fill="#6c6b75" />
        <path d="M147 297V304L168 313 185 299V291Z" fill="#34343a" />
        <path d="M147 297 161 286 185 291 169 306Z" fill="#6c6b75" />
      </g>
    </svg>
  );
}

function Viewport() {
  return (
    <div className="relative flex h-full flex-1 border-r border-[#8d909c]">
      <Chamber />
      <div className="absolute top-[122px] left-0 flex h-[23px] w-[5px] items-center justify-center border border-[#ccc] bg-[#f6f6f6]">
        <span className="size-[3px] rounded-full border border-[#aaa]" />
      </div>
      <svg viewBox="0 0 36 36" className="absolute top-[231px] left-[4px] size-9">
        <path d="M18 21V9" stroke="#267d2c" strokeWidth="1.8" />
        <path d="M15.200 13 18 6 20.800 13Z" fill="#267d2c" />
        <path d="M18 21 10 25" stroke="#2830c6" strokeWidth="2" />
        <path d="M6 27 11 21.500 13 26.500Z" fill="#2830c6" />
        <path d="M18 21 27 25" stroke="#bc2329" strokeWidth="2" />
        <path d="M30 27 23 26.500 25.500 21.500Z" fill="#bc2329" />
        <path d="M16.500 1 18 3 19.500 1M18 3V5.500" fill="none" stroke="#74b675" strokeWidth="1" />
        <path d="M4 25.500H7L4 29.500H7" fill="none" stroke="#747be0" strokeWidth="1" />
        <path d="M29 26 33 30M33 26 29 30" stroke="#e57f7f" strokeWidth="1" />
      </svg>
      <Fit w={36} className="absolute top-[271px] left-[4px] text-[7px] leading-[10px] font-semibold text-black">*Isometric</Fit>
      <div className="mt-[23px] ml-auto flex h-[94px] w-[14px] shrink-0 flex-col border-l border-[#b0b0b0]">
        {["home", "lib", "folder", "palette", "ballDark", "config2", "chat"].map((n, i) => (
          <div key={n} className={"flex flex-1 items-center justify-center border-b border-[#aaa] " + (i === 0 ? "bg-[#f7f7f7]" : "bg-[#d4d4d4]")}>
            <Ic n={n} className="size-[11px]" />
          </div>
        ))}
      </div>
    </div>
  );
}

function Section({ title, w, className, children }) {
  return (
    <div className={"ml-[6px] w-[89px] shrink-0 border-t border-[#b9b9b9] " + className}>
      <div className="flex h-[9px] items-center pl-px">
        <Fit w={w} className="text-[6.1px] leading-none font-bold text-[#444]">{title}</Fit>
        <Ic n="up" className="mr-[2px] ml-auto size-[6px]" />
      </div>
      {children}
    </div>
  );
}

function Link({ icon, w, children }) {
  return (
    <div className="flex h-[13.2px] items-center">
      <Ic n={icon} className="size-2" />
      <Fit w={w} className="ml-px text-[6.2px] leading-none text-[#808080]">{children}</Fit>
    </div>
  );
}

function TaskPane() {
  return (
    <div className="flex w-[108px] shrink-0 flex-col bg-[#f7f7f7]">
      <div className="flex h-[13px] shrink-0 items-center bg-[#a9a9a9] pl-[5px]">
        <Fit w={80} className="text-[6.4px] font-bold text-[#222]">{"<<SOLIDWORKS Resourc"}</Fit>
        <svg viewBox="0 0 12 12" className="-ml-px size-[10px] shrink-0">
          <circle cx="6" cy="6" r="4.300" fill="none" stroke="#fff" strokeWidth="2.2" strokeDasharray="1.800 1.200" />
          <circle cx="6" cy="6" r="3" fill="none" stroke="#fff" strokeWidth="1.2" />
          <circle cx="6" cy="6" r=".900" fill="#fff" />
        </svg>
        <Ic n="pin" className="ml-[3px] size-[8px]" />
      </div>
      <div className="mt-[13px] ml-[6px] h-[13px] shrink-0"><Link icon="home" w={68}>Welcome to SOLIDWORKS</Link></div>
      <Section className="mt-[12px]" title="SOLIDWORKS Tools" w={54}>
        <Link icon="redtool" w={52}>Property Tab Builder</Link>
        <Link icon="redtool" w={44}>SOLIDWORKS Rx</Link>
        <Link icon="redtool" w={75}>Performance Benchmark Test</Link>
        <Link icon="score" w={49}>Compare My Score</Link>
        <Link icon="copytool" w={55}>Copy Settings Wizard</Link>
        <Link icon="products" w={32}>My Products</Link>
      </Section>
      <Section className="mt-[11px]" title="Online Resources" w={48}>
        <Link icon="globe" w={72}>3DEXPERIENCE Marketplace</Link>
        <Link icon="partner" w={44}>Partner Solutions</Link>
      </Section>
      <Section className="mt-[12px]" title="Subscription Services" w={60}>
        <Link icon="subs" w={54}>Subscription Services</Link>
      </Section>
    </div>
  );
}

function CadWindow() {
  return (
    <div className="ml-[65px] flex h-[375px] w-[703px] flex-col overflow-hidden text-[#454545]">
      <TitleBar />
      <Ribbon />
      <div className="flex h-[303px] shrink-0">
        <div className="flex w-[595px] shrink-0 flex-col">
          <div className="flex h-[294px] shrink-0 flex-col bg-[radial-gradient(ellipse_42%_60%_at_84%_30%,rgba(212,217,232,.95)_0%,rgba(225,229,240,.6)_50%,rgba(255,255,255,0)_100%),linear-gradient(180deg,#fff_0%,#fdfdff_20%,#eff1f7_38%,#dfe3ee_54%,#e6e9f2_58%,#f7f8fb_65%,#fff_76%,#fff_85%,#f6f7fb_100%)]">
            <TabsAndHud />
            <div className="flex h-[281px] shrink-0">
              <FeaturePanel />
              <Viewport />
            </div>
          </div>
          <div className="flex h-[9px] shrink-0 items-stretch border-t border-[#b8b8b8] bg-[#f5f5f5]">
            <div className="ml-[10px] flex w-[35px] items-center justify-around bg-[#aaaebf]">
              {["left", "left", "right", "right"].map((n, i) => (
                <span key={i} className="flex h-full flex-1 items-center justify-center border-r border-[#888ea4]"><Ic n={n} className="size-[5px] opacity-50" /></span>
              ))}
            </div>
            <div className="flex w-[35px] items-center justify-center bg-white"><Fit w={21} className="text-[6.7px] leading-none font-bold text-black">Model</Fit></div>
            <div className="flex w-[60px] items-center border-x border-[#b5b5b5] bg-[#d6d6d6] pl-[2px]"><Fit w={47} className="text-[6.7px] leading-none">Motion Study 1</Fit></div>
          </div>
        </div>
        <TaskPane />
      </div>
      <div className="flex h-[10px] shrink-0 items-center border-y border-t-[#c5c5c5] border-b-[#aaa] bg-[#f5f5f5] pt-px">
        <Fit w={150} className="text-[6.7px] leading-none">SOLIDWORKS Student Edition - Academic Use Only</Fit>
        <Fit w={34} className="ml-[428px] text-[6.6px] leading-none">Editing Part</Fit>
        <Fit w={21} className="ml-[22px] text-[6.6px] leading-none">MMGS</Fit>
        <Ic n="caret" className="ml-[8px] size-[4px]" />
        <Ic n="tags" className="ml-[24px] size-[10px]" />
      </div>
    </div>
  );
}

export default function App() {
  const line = "flex h-7 items-center";
  return (
    <div className="h-[825px] w-[832px] overflow-hidden bg-white font-['Open_Sans','Noto_Sans',sans-serif]">
      <div className="h-[3px] bg-linear-to-b from-[#dcdcdc] to-white" />
      <div className="flex h-[82px] justify-end pt-[2px] pr-16">
        <Fit w={148} className="font-['Lato','Open_Sans',sans-serif] text-[19px] leading-[28px] text-black">ReactonChamber</Fit>
      </div>
      <CadWindow />
      <div className="mt-[54px] ml-[65px] text-[19.5px] leading-7 [word-spacing:1.5px] text-black">
        <div className={line}><Fit w={338}>Mass properties of ReactonChamber</Fit></div>
        <div className={line + " pl-[28px]"}><Fit w={206}>Configuration: Default</Fit></div>
        <div className={line + " pl-[28px]"}><Fit w={294}>Coordinate system: -- default --</Fit></div>
        <div className={line + " mt-7"}><Fit w={387}>Density = 0.01 grams per cubic millimeter</Fit></div>
        <div className={line + " mt-7"}><Fit w={209}>Mass = 2469.09 grams</Fit></div>
        <div className={line + " mt-7"}><Fit w={355}>Volume = 313734.90 cubic millimeters</Fit></div>
        <div className={line + " mt-7"}><Fit w={399}>Surface area = 48657.67 square millimeters</Fit></div>
      </div>
    </div>
  );
}
